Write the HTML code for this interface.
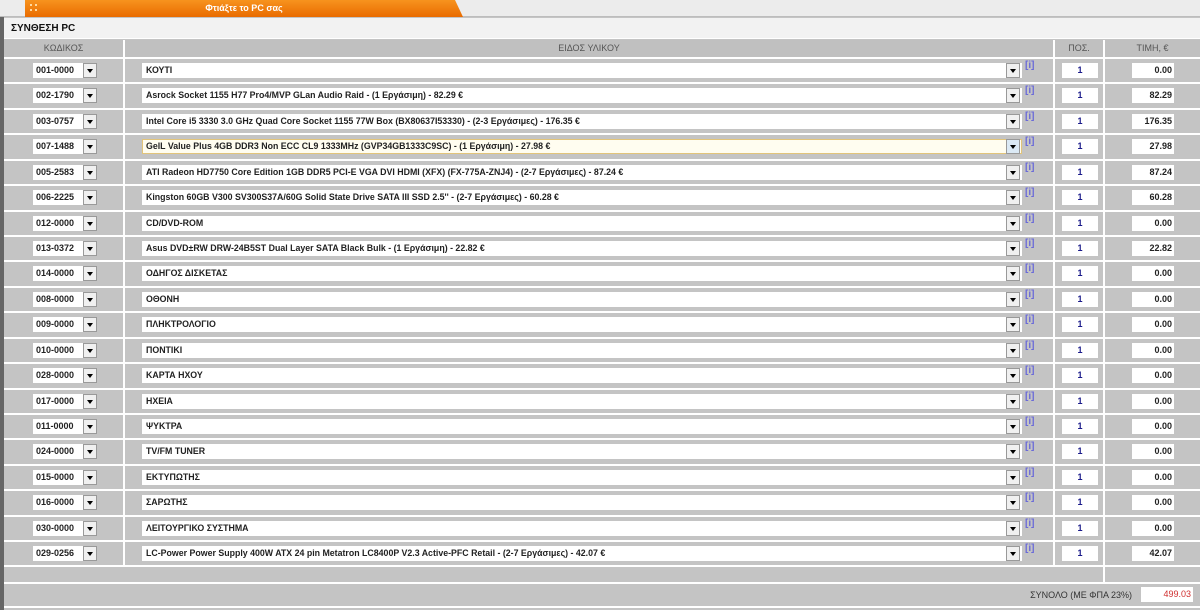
<!DOCTYPE html>
<html><head><meta charset="utf-8"><style>
*{margin:0;padding:0;box-sizing:border-box}
body{width:1200px;height:610px;overflow:hidden;background:#c4c4c4;font-family:"Liberation Sans",Arial,sans-serif;position:relative}
.topbar{position:absolute;left:0;top:0;width:1200px;height:17px;background:#ececec;border-bottom:1px solid #bdbdbd}
.tab{position:absolute;left:25px;top:0;width:438px;height:17px;background:linear-gradient(#f7931e,#e96b00);clip-path:polygon(0 0,430px 0,438px 17px,0 17px);color:#fff;font-size:9px;font-weight:bold;text-align:center;line-height:17px}
.tab i{position:absolute;left:5px;top:4px;width:7px;height:7px;border:2px dotted #ffd9a0}
.lb{position:absolute;left:0;top:17px;width:4px;height:593px;background:#666}
.hdr{position:absolute;left:4px;top:18px;width:1196px;height:21px;background:#f2f2f2;font-size:10px;font-weight:bold;line-height:21px;padding-left:7px;color:#111;border-bottom:1px solid #fff}
.ch{position:absolute;top:40px;height:17px;background:#c0c0c0;font-size:9px;color:#555;text-align:center;line-height:16px}
.row{position:absolute;left:4px;width:1196px;height:25.42px;border-top:2px solid #fff}
.vs{position:absolute;top:40px;width:2px;height:543px;background:#fff}
.code{position:absolute;left:29px;top:4px;width:50px;height:15px;background:#fff;font-size:9px;font-weight:bold;color:#222;line-height:15px;padding-left:3px}
.ab{position:absolute;top:4px;width:14px;height:15px;background:#f0f0f0;border:1px solid #999}
.ab:after{content:"";position:absolute;left:3px;top:5px;border-left:3px solid transparent;border-right:3px solid transparent;border-top:4px solid #000}
.sel{position:absolute;left:138px;top:4px;width:880px;height:15px;background:#fff;font-size:8.8px;font-weight:bold;color:#222;line-height:15px;padding-left:4px;white-space:nowrap;overflow:hidden}
.sel.h{border:1px solid #e2c47a;background:#fffdf0;line-height:13px;padding-left:3px}
.info{position:absolute;left:1021px;top:1px;font-size:10px;color:#6a6ad8;font-weight:bold}
.q{position:absolute;left:1058px;top:4px;width:36px;height:15px;background:#fff;font-size:9px;font-weight:bold;color:#1a1a8a;text-align:center;line-height:15px}
.p{position:absolute;left:1128px;top:4px;width:42px;height:15px;background:#fff;font-size:9px;font-weight:bold;color:#222;text-align:right;line-height:15px;padding-right:2px}
</style></head><body>
<div class="topbar"></div>
<div class="tab"><i></i>Φτιάξτε το PC σας</div>
<div class="lb"></div>
<div class="hdr">ΣΥΝΘΕΣΗ PC</div>
<div class="ch" style="left:4px;width:119px">ΚΩΔΙΚΟΣ</div>
<div class="ch" style="left:125px;width:928px">ΕΙΔΟΣ ΥΛΙΚΟΥ</div>
<div class="ch" style="left:1055px;width:48px">ΠΟΣ.</div>
<div class="ch" style="left:1105px;width:95px">ΤΙΜΗ, €</div>

<div class="row" style="top:57px"><div class="code">001-0000</div><div class="ab" style="left:79px"></div><div class="sel">ΚΟΥΤΙ</div><div class="ab" style="left:1002px"></div><div class="info">[i]</div><div class="q">1</div><div class="p">0.00</div></div>
<div class="row" style="top:82.4px"><div class="code">002-1790</div><div class="ab" style="left:79px"></div><div class="sel">Asrock Socket 1155 H77 Pro4/MVP GLan Audio Raid - (1 Εργάσιμη) - 82.29 €</div><div class="ab" style="left:1002px"></div><div class="info">[i]</div><div class="q">1</div><div class="p">82.29</div></div>
<div class="row" style="top:107.8px"><div class="code">003-0757</div><div class="ab" style="left:79px"></div><div class="sel">Intel Core i5 3330 3.0 GHz Quad Core Socket 1155 77W Box (BX80637I53330) - (2-3 Εργάσιμες) - 176.35 €</div><div class="ab" style="left:1002px"></div><div class="info">[i]</div><div class="q">1</div><div class="p">176.35</div></div>
<div class="row" style="top:133.3px"><div class="code">007-1488</div><div class="ab" style="left:79px"></div><div class="sel h">GelL Value Plus 4GB DDR3 Non ECC CL9 1333MHz (GVP34GB1333C9SC) - (1 Εργάσιμη) - 27.98 €</div><div class="ab" style="left:1002px;background:#dbe9f5"></div><div class="info">[i]</div><div class="q">1</div><div class="p">27.98</div></div>
<div class="row" style="top:158.7px"><div class="code">005-2583</div><div class="ab" style="left:79px"></div><div class="sel">ATI Radeon HD7750 Core Edition 1GB DDR5 PCI-E VGA DVI HDMI (XFX) (FX-775A-ZNJ4) - (2-7 Εργάσιμες) - 87.24 €</div><div class="ab" style="left:1002px"></div><div class="info">[i]</div><div class="q">1</div><div class="p">87.24</div></div>
<div class="row" style="top:184.1px"><div class="code">006-2225</div><div class="ab" style="left:79px"></div><div class="sel">Kingston 60GB V300 SV300S37A/60G Solid State Drive SATA III SSD 2.5'' - (2-7 Εργάσιμες) - 60.28 €</div><div class="ab" style="left:1002px"></div><div class="info">[i]</div><div class="q">1</div><div class="p">60.28</div></div>
<div class="row" style="top:209.5px"><div class="code">012-0000</div><div class="ab" style="left:79px"></div><div class="sel">CD/DVD-ROM</div><div class="ab" style="left:1002px"></div><div class="info">[i]</div><div class="q">1</div><div class="p">0.00</div></div>
<div class="row" style="top:234.9px"><div class="code">013-0372</div><div class="ab" style="left:79px"></div><div class="sel">Asus DVD±RW DRW-24B5ST Dual Layer SATA Black Bulk - (1 Εργάσιμη) - 22.82 €</div><div class="ab" style="left:1002px"></div><div class="info">[i]</div><div class="q">1</div><div class="p">22.82</div></div>
<div class="row" style="top:260.4px"><div class="code">014-0000</div><div class="ab" style="left:79px"></div><div class="sel">ΟΔΗΓΟΣ ΔΙΣΚΕΤΑΣ</div><div class="ab" style="left:1002px"></div><div class="info">[i]</div><div class="q">1</div><div class="p">0.00</div></div>
<div class="row" style="top:285.8px"><div class="code">008-0000</div><div class="ab" style="left:79px"></div><div class="sel">ΟΘΟΝΗ</div><div class="ab" style="left:1002px"></div><div class="info">[i]</div><div class="q">1</div><div class="p">0.00</div></div>
<div class="row" style="top:311.2px"><div class="code">009-0000</div><div class="ab" style="left:79px"></div><div class="sel">ΠΛΗΚΤΡΟΛΟΓΙΟ</div><div class="ab" style="left:1002px"></div><div class="info">[i]</div><div class="q">1</div><div class="p">0.00</div></div>
<div class="row" style="top:336.6px"><div class="code">010-0000</div><div class="ab" style="left:79px"></div><div class="sel">ΠΟΝΤΙΚΙ</div><div class="ab" style="left:1002px"></div><div class="info">[i]</div><div class="q">1</div><div class="p">0.00</div></div>
<div class="row" style="top:362px"><div class="code">028-0000</div><div class="ab" style="left:79px"></div><div class="sel">ΚΑΡΤΑ ΗΧΟΥ</div><div class="ab" style="left:1002px"></div><div class="info">[i]</div><div class="q">1</div><div class="p">0.00</div></div>
<div class="row" style="top:387.5px"><div class="code">017-0000</div><div class="ab" style="left:79px"></div><div class="sel">ΗΧΕΙΑ</div><div class="ab" style="left:1002px"></div><div class="info">[i]</div><div class="q">1</div><div class="p">0.00</div></div>
<div class="row" style="top:412.9px"><div class="code">011-0000</div><div class="ab" style="left:79px"></div><div class="sel">ΨΥΚΤΡΑ</div><div class="ab" style="left:1002px"></div><div class="info">[i]</div><div class="q">1</div><div class="p">0.00</div></div>
<div class="row" style="top:438.3px"><div class="code">024-0000</div><div class="ab" style="left:79px"></div><div class="sel">TV/FM TUNER</div><div class="ab" style="left:1002px"></div><div class="info">[i]</div><div class="q">1</div><div class="p">0.00</div></div>
<div class="row" style="top:463.7px"><div class="code">015-0000</div><div class="ab" style="left:79px"></div><div class="sel">ΕΚΤΥΠΩΤΗΣ</div><div class="ab" style="left:1002px"></div><div class="info">[i]</div><div class="q">1</div><div class="p">0.00</div></div>
<div class="row" style="top:489.1px"><div class="code">016-0000</div><div class="ab" style="left:79px"></div><div class="sel">ΣΑΡΩΤΗΣ</div><div class="ab" style="left:1002px"></div><div class="info">[i]</div><div class="q">1</div><div class="p">0.00</div></div>
<div class="row" style="top:514.6px"><div class="code">030-0000</div><div class="ab" style="left:79px"></div><div class="sel">ΛΕΙΤΟΥΡΓΙΚΟ ΣΥΣΤΗΜΑ</div><div class="ab" style="left:1002px"></div><div class="info">[i]</div><div class="q">1</div><div class="p">0.00</div></div>
<div class="row" style="top:540px"><div class="code">029-0256</div><div class="ab" style="left:79px"></div><div class="sel">LC-Power Power Supply 400W ATX 24 pin Metatron LC8400P V2.3 Active-PFC Retail - (2-7 Εργάσιμες) - 42.07 €</div><div class="ab" style="left:1002px"></div><div class="info">[i]</div><div class="q">1</div><div class="p">42.07</div></div>
<div class="row" style="top:565.4px;height:18px"></div>
<div class="vs" style="left:123px;height:527px"></div>
<div class="vs" style="left:1053px;height:527px"></div>
<div class="vs" style="left:1103px"></div>
<div style="position:absolute;left:4px;top:582px;width:1196px;height:2px;background:#fff"></div>
<div style="position:absolute;left:1000px;top:590px;width:132px;font-size:9px;color:#333;text-align:right">ΣΥΝΟΛΟ (ΜΕ ΦΠΑ 23%)</div>
<div style="position:absolute;left:1141px;top:587px;width:52px;height:15px;background:#fff;font-size:9px;color:#d03030;text-align:right;line-height:15px;padding-right:2px">499.03</div>
<div style="position:absolute;left:4px;top:606px;width:1196px;height:2px;background:#fff"></div>
</body></html>
